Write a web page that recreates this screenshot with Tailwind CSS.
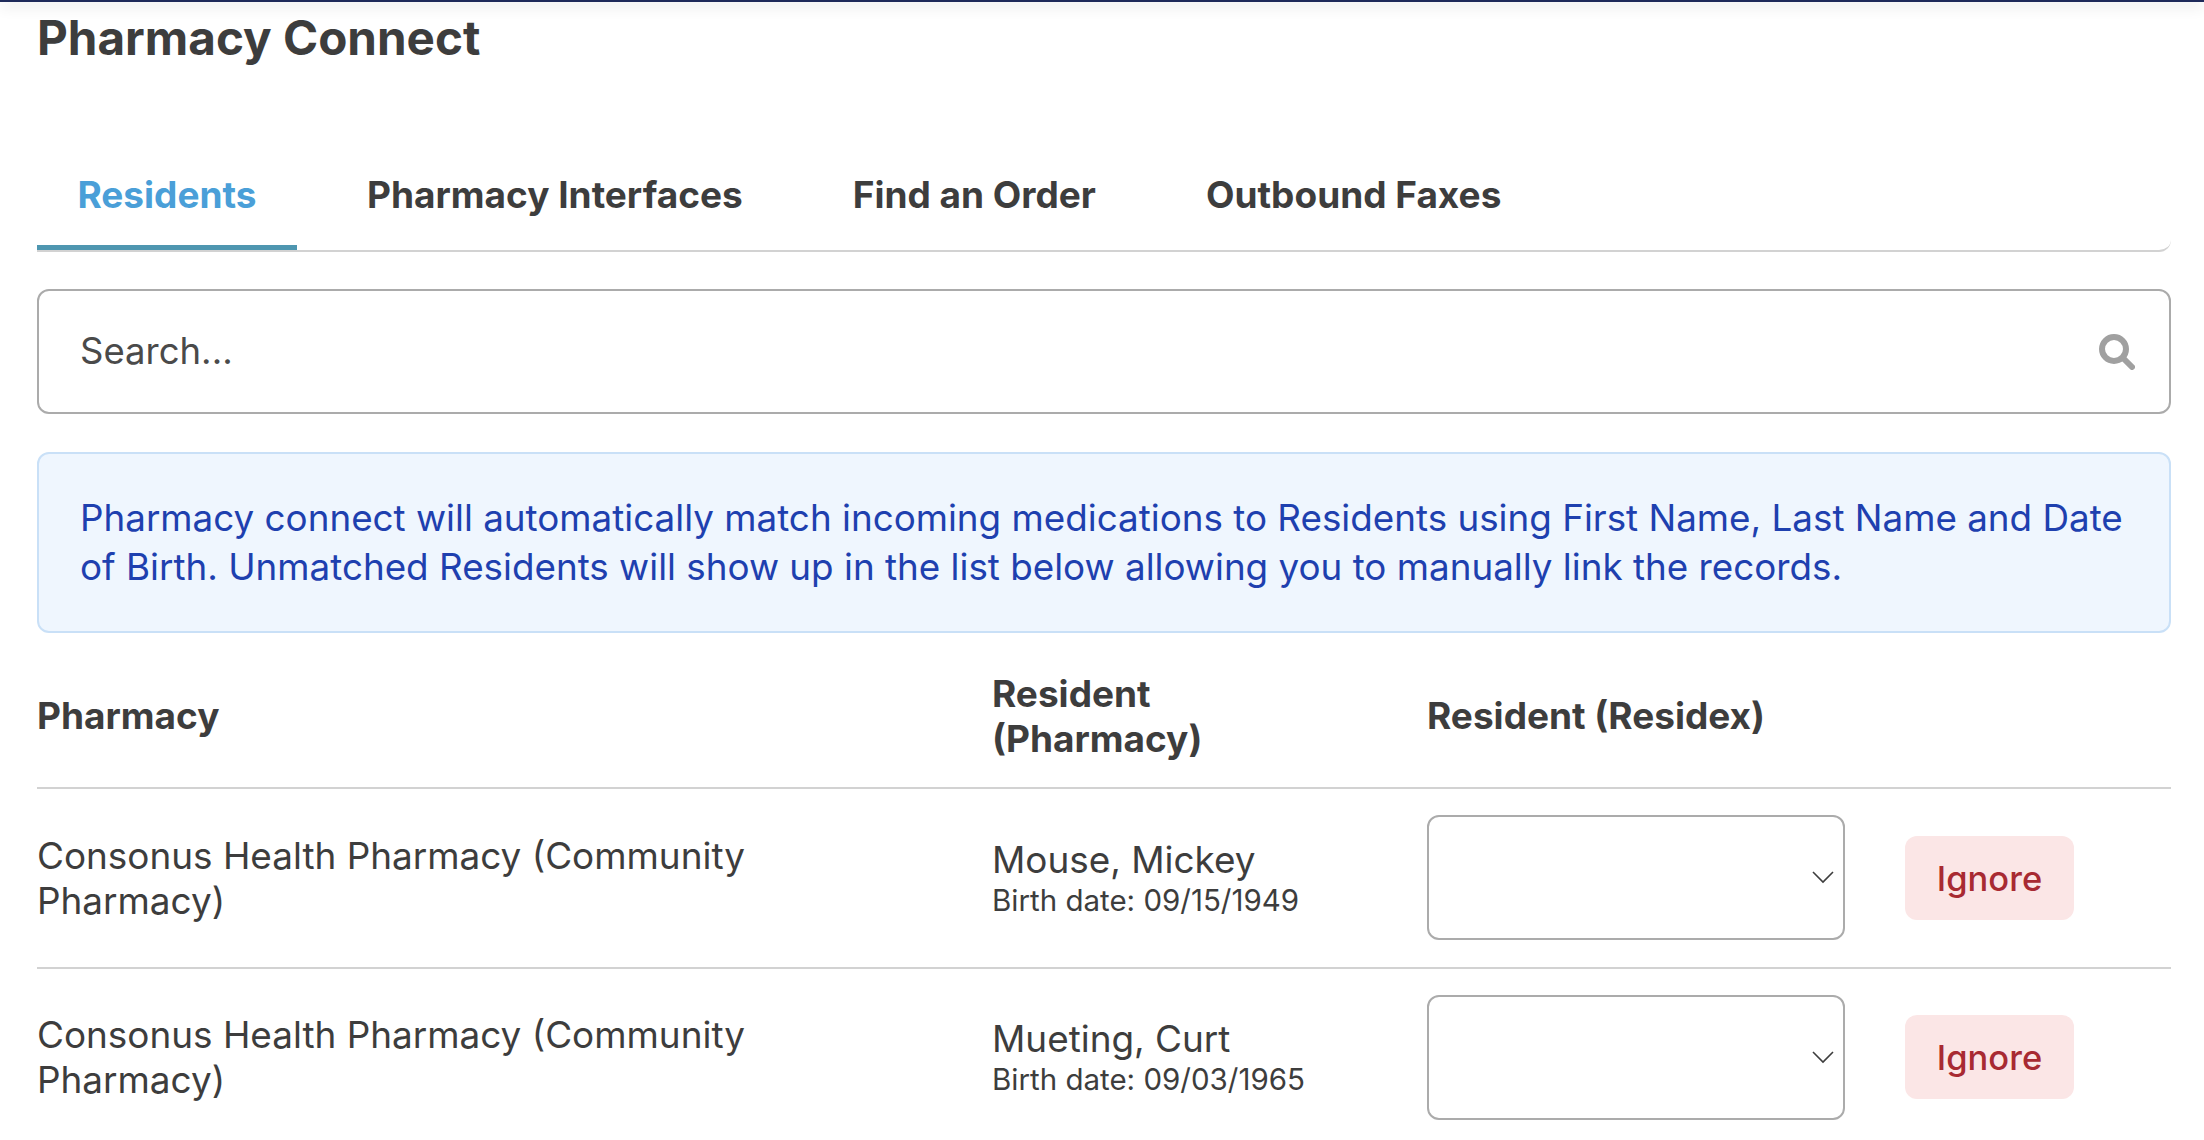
<!DOCTYPE html>
<html lang="en">

<head>
    <meta charset="UTF-8">
    <meta name="viewport" content="width=device-width, initial-scale=1.0">
    <title>Pharmacy Connect</title>
    <script src="https://cdn.jsdelivr.net/npm/@tailwindcss/browser@4"></script>
</head>

<body class="bg-white text-[#3d3d3d] font-[Inter,sans-serif] h-screen overflow-hidden">
    <!-- Top bar -->
    <div class="h-[2px] bg-[#1e2a5a] shadow-[0_3px_14px_rgba(0,0,0,0.3)]"></div>

    <div class="pl-[37px] pr-[33px]">
        <h1 class="text-[47.6px] leading-[54px] font-bold mt-[9px]">Pharmacy Connect</h1>

        <!-- Tabs -->
        <div class="flex mt-[102px] h-[85px] border-b-2 border-[#d2d2d2] rounded-br-xl text-[37px] font-bold">
            <div class="w-[260px] flex items-center justify-center pb-[22px] text-[#4a9fd8] border-b-[5px] border-[#4e96b0]">Residents</div>
            <div class="ml-[70px] pb-[27px] flex items-center">Pharmacy Interfaces</div>
            <div class="ml-[110px] pb-[27px] flex items-center">Find an Order</div>
            <div class="ml-[110px] pb-[27px] flex items-center">Outbound Faxes</div>
        </div>

        <!-- Search -->
        <div class="mt-[37px] h-[125px] border-2 border-[#ababab] rounded-xl flex items-center justify-between pl-[41px] pr-[34px]">
            <span class="text-[36.5px] text-[#4a4a4a]">Search...</span>
            <svg class="w-[36px] h-[36px]" viewBox="0 0 36 36" fill="none" stroke="#a0a0a0">
                <circle cx="15" cy="15" r="12" stroke-width="6" />
                <path d="M24 24l9 9" stroke-width="6" stroke-linecap="round" />
            </svg>
        </div>

        <!-- Info alert -->
        <div class="mt-[38px] h-[181px] border-2 border-[#c9e0f7] rounded-xl bg-[#eff6fe] pl-[41px] pr-[30px] pb-[2px] flex items-center text-[36.8px] leading-[49px] text-[#1e40af]">
            <p>Pharmacy connect will automatically match incoming medications to Residents using First Name, Last Name and Date of Birth. Unmatched Residents will show up in the list below allowing you to manually link the records.</p>
        </div>

        <!-- Unmatched residents -->
        <table class="w-full table-fixed text-left">
            <thead>
                <tr class="h-[155px] border-b-2 border-[#d2d2d2] text-[37px] leading-[45px]">
                    <th class="w-[955px] font-bold pt-[11px]">Pharmacy</th>
                    <th class="w-[435px] font-bold pt-[12px]">Resident<br>(Pharmacy)</th>
                    <th class="font-bold pt-[11px]">Resident (Residex)</th>
                </tr>
            </thead>
            <tbody>
                <tr class="h-[180px] border-b-2 border-[#d2d2d2]">
                    <td class="text-[36.9px] leading-[45px] pr-[200px]">Consonus Health Pharmacy (Community Pharmacy)</td>
                    <td>
                        <div class="text-[36.9px] leading-[44px]">Mouse, Mickey</div>
                        <div class="text-[29.5px] leading-[36px]">Birth date: 09/15/1949</div>
                    </td>
                    <td>
                        <div class="flex items-center">
                            <div class="w-[418px] h-[125px] mb-[2px] border-2 border-[#ababab] rounded-xl flex items-center justify-end pr-[9px]">
                                <svg class="w-[22px] h-[13px]" viewBox="0 0 22 13" fill="none" stroke="#3d3d3d" stroke-width="1.6">
                                    <path d="M1 1l10 10L21 1" />
                                </svg>
                            </div>
                            <button class="ml-[60px] w-[169px] h-[84px] pt-[2px] rounded-xl bg-[#fbe6e6] text-[#a82a32] text-[34.5px] font-medium">Ignore</button>
                        </div>
                    </td>
                </tr>
                <tr class="h-[176px]">
                    <td class="text-[36.9px] leading-[45px] pr-[200px]">Consonus Health Pharmacy (Community Pharmacy)</td>
                    <td>
                        <div class="text-[36.9px] leading-[44px]">Mueting, Curt</div>
                        <div class="text-[29.5px] leading-[36px]">Birth date: 09/03/1965</div>
                    </td>
                    <td>
                        <div class="flex items-center">
                            <div class="w-[418px] h-[125px] mt-[2px] border-2 border-[#ababab] rounded-xl flex items-center justify-end pr-[9px]">
                                <svg class="w-[22px] h-[13px]" viewBox="0 0 22 13" fill="none" stroke="#3d3d3d" stroke-width="1.6">
                                    <path d="M1 1l10 10L21 1" />
                                </svg>
                            </div>
                            <button class="ml-[60px] w-[169px] h-[84px] pt-[2px] rounded-xl bg-[#fbe6e6] text-[#a82a32] text-[34.5px] font-medium">Ignore</button>
                        </div>
                    </td>
                </tr>
            </tbody>
        </table>
    </div>
</body>

</html>
